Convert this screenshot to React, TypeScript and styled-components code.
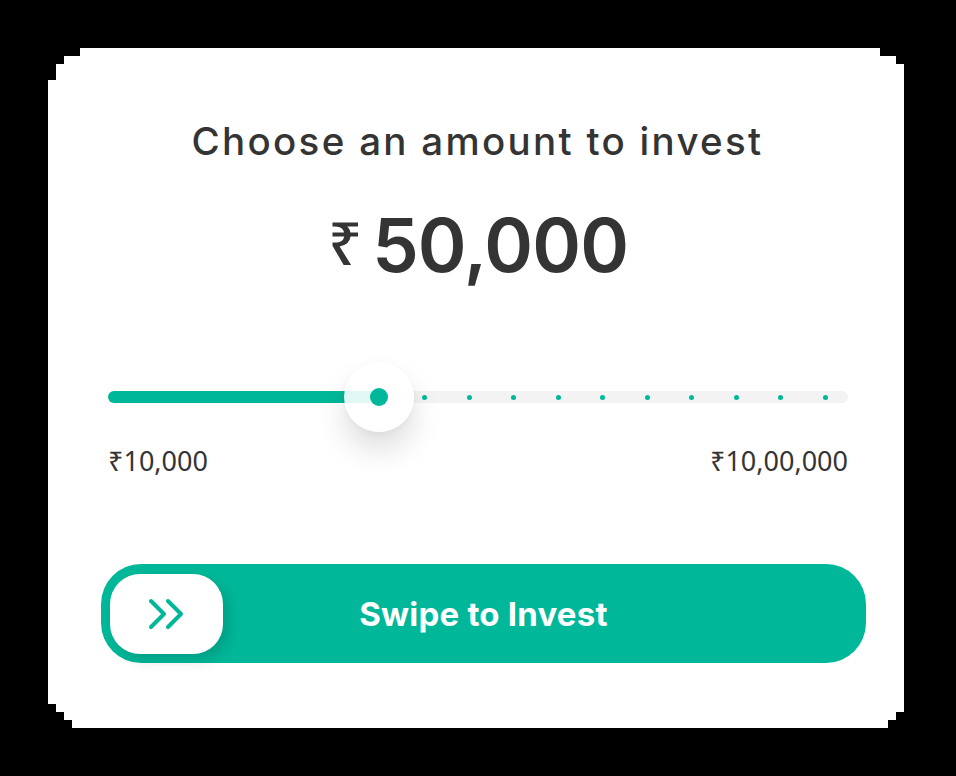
import React from "react";
import styled, { createGlobalStyle } from "styled-components";

const GREEN = "#00b899";
const INK = "#343434";

const Global = createGlobalStyle`
  html, body { margin: 0; padding: 0; background: #000; }
  body { font-family: Inter, "Noto Sans", sans-serif; }
`;

const Page = styled.div`
  width: 956px;
  height: 776px;
  background: #000;
  padding: 48px;
  box-sizing: border-box;
`;

const Card = styled.div`
  width: 856px;
  height: 680px;
  background: #fff;
  display: flex;
  flex-direction: column;
  align-items: center;
  padding-top: 71px;
  box-sizing: border-box;
  clip-path: polygon(
    32px 0, 832px 0, 832px 8px, 848px 8px, 848px 16px, 856px 16px,
    856px 664px, 848px 664px, 848px 672px, 840px 672px, 840px 680px,
    24px 680px, 24px 672px, 16px 672px, 16px 664px, 8px 664px, 8px 656px,
    0 656px, 0 32px, 8px 32px, 8px 16px, 16px 16px, 16px 8px, 32px 8px
  );
`;

const Title = styled.h1`
  margin: 0 0 0 3px;
  font-family: Inter, "Noto Sans", sans-serif;
  font-weight: 500;
  font-size: 38.5px;
  line-height: 44px;
  color: ${INK};
  letter-spacing: 2.3px;
`;

const Amount = styled.div`
  margin-top: 37px;
  margin-left: 4px;
  height: 90px;
  display: flex;
  align-items: center;
  gap: 10px;
  color: ${INK};
`;

const Rupee = styled.span`
  font-family: "Noto Sans", "DejaVu Sans", sans-serif;
  font-size: 60px;
  font-weight: 500;
  line-height: 1;
  margin-top: -6px;
`;

const Value = styled.span`
  font-family: Inter, "Noto Sans", sans-serif;
  font-size: 74px;
  font-weight: 600;
  line-height: 90px;
  letter-spacing: -0.9px;
`;

const SliderBox = styled.div`
  margin-top: 72px;
  align-self: flex-start;
  margin-left: 60px;
  width: 740px;
  height: 70px;
  display: flex;
  align-items: center;
`;

const Track = styled.div`
  position: relative;
  width: 100%;
  height: 12px;
  border-radius: 6px;
  background: #f3f3f3;
`;

const Fill = styled.div`
  height: 100%;
  border-radius: 6px 0 0 6px;
  background: ${GREEN};
`;

const Dots = styled.div`
  position: absolute;
  left: 314px;
  right: 20px;
  top: 0;
  bottom: 0;
  display: flex;
  justify-content: space-between;
  align-items: center;
`;

const Dot = styled.span`
  width: 5px;
  height: 5px;
  border-radius: 50%;
  background: ${GREEN};
`;

const Thumb = styled.div`
  position: absolute;
  top: -29px;
  width: 70px;
  height: 70px;
  margin-left: -35px;
  border-radius: 50%;
  background: rgba(255, 255, 255, 0.88);
  box-shadow: 0 18px 30px rgba(0, 0, 0, 0.13), 0 2px 6px rgba(0, 0, 0, 0.04);
  display: flex;
  align-items: center;
  justify-content: center;
`;

const ThumbDot = styled.span`
  width: 18px;
  height: 18px;
  border-radius: 50%;
  background: ${GREEN};
`;

const Limits = styled.div`
  margin-top: 15px;
  align-self: flex-start;
  margin-left: 60px;
  width: 740px;
  display: flex;
  justify-content: space-between;
  font-family: "Noto Sans", "Open Sans", sans-serif;
  font-size: 27px;
  line-height: 28px;
  color: ${INK};
`;

const SwipeButton = styled.div`
  margin-top: 89px;
  align-self: flex-start;
  margin-left: 53px;
  width: 765px;
  height: 99px;
  border-radius: 40px;
  background: ${GREEN};
  display: grid;
  align-items: center;
  padding: 0 9px;
  box-sizing: border-box;
`;

const Knob = styled.div`
  grid-area: 1 / 1;
  justify-self: start;
  width: 113px;
  height: 80px;
  border-radius: 30px;
  background: #fff;
  box-shadow: 6px 6px 14px rgba(0, 0, 0, 0.14);
  display: flex;
  align-items: center;
  justify-content: center;
`;

const ButtonLabel = styled.span`
  grid-area: 1 / 1;
  justify-self: center;
  font-family: Inter, "Noto Sans", sans-serif;
  font-weight: 700;
  font-size: 33px;
  color: #fff;
  letter-spacing: 0.2px;
`;

const ChevronsIcon = () => (
  <svg width="40" height="34" viewBox="0 0 40 34" fill="none">
    <path
      d="M4 4 L17 17 L4 30 M21 4 L34 17 L21 30"
      stroke={GREEN}
      strokeWidth="4"
      strokeLinecap="round"
      strokeLinejoin="round"
    />
  </svg>
);

export default function App() {
  const pct = 36.62;
  return (
    <>
      <Global />
      <Page>
        <Card>
          <Title>Choose an amount to invest</Title>
          <Amount>
            <Rupee>₹</Rupee>
            <Value>50,000</Value>
          </Amount>
          <SliderBox>
            <Track>
              <Fill style={{ width: `${pct}%` }} />
              <Dots>
                {Array.from({ length: 10 }).map((_, i) => (
                  <Dot key={i} />
                ))}
              </Dots>
              <Thumb style={{ left: `${pct}%` }}>
                <ThumbDot />
              </Thumb>
            </Track>
          </SliderBox>
          <Limits>
            <span>₹10,000</span>
            <span>₹10,00,000</span>
          </Limits>
          <SwipeButton>
            <Knob>
              <ChevronsIcon />
            </Knob>
            <ButtonLabel>Swipe to Invest</ButtonLabel>
          </SwipeButton>
        </Card>
      </Page>
    </>
  );
}
